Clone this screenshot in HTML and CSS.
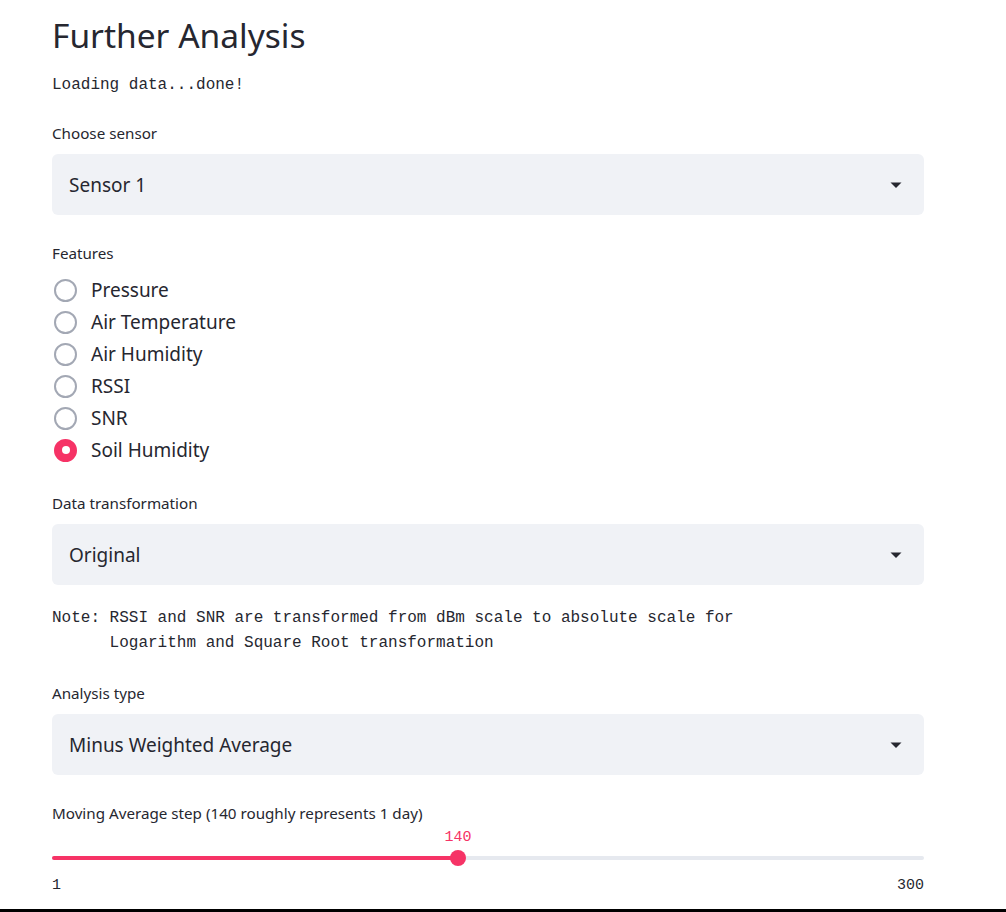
FILE: index.html
```html
<!DOCTYPE html>
<html>
<head>
<meta charset="utf-8">
<link rel="stylesheet" href="styles.css">
</head>
<body>
<main class="main">
  <h1 class="title">Further Analysis</h1>
  <pre class="code">Loading data...done!</pre>

  <div class="widget">
    <div class="label">Choose sensor</div>
    <div class="select"><span>Sensor 1</span><svg class="caret" width="12" height="7" viewBox="0 0 12 7"><path d="M0.5 0.5 H11.5 L6 6 Z" fill="#262730"/></svg></div>
  </div>

  <div class="widget features">
    <div class="label">Features</div>
    <div class="radios">
      <div class="radio"><span class="dot"></span>Pressure</div>
      <div class="radio"><span class="dot"></span>Air Temperature</div>
      <div class="radio"><span class="dot"></span>Air Humidity</div>
      <div class="radio"><span class="dot"></span>RSSI</div>
      <div class="radio"><span class="dot"></span>SNR</div>
      <div class="radio"><span class="dot on"></span>Soil Humidity</div>
    </div>
  </div>

  <div class="widget">
    <div class="label">Data transformation</div>
    <div class="select"><span>Original</span><svg class="caret" width="12" height="7" viewBox="0 0 12 7"><path d="M0.5 0.5 H11.5 L6 6 Z" fill="#262730"/></svg></div>
  </div>

  <pre class="code note">Note: RSSI and SNR are transformed from dBm scale to absolute scale for
      Logarithm and Square Root transformation</pre>

  <div class="widget">
    <div class="label">Analysis type</div>
    <div class="select"><span>Minus Weighted Average</span><svg class="caret" width="12" height="7" viewBox="0 0 12 7"><path d="M0.5 0.5 H11.5 L6 6 Z" fill="#262730"/></svg></div>
  </div>

  <div class="widget slider">
    <div class="label">Moving Average step (140 roughly represents 1 day)</div>
    <div class="track-wrap">
      <div class="track">
        <div class="fill" style="width: 46.56%"></div>
        <div class="thumb" style="left: 46.56%"><span class="val">140</span></div>
      </div>
    </div>
    <div class="ticks"><span>1</span><span>300</span></div>
  </div>
</main>
<div class="bottom-bar"></div>
</body>
</html>
```
FILE: styles.css
```css
html, body {
  margin: 0;
  padding: 0;
  background: #ffffff;
}
body {
  font-family: "Noto Sans", "Open Sans", sans-serif;
  color: #262730;
  width: 1006px;
  height: 912px;
  overflow: hidden;
  position: relative;
}
.main {
  width: 872px;
  padding: 12px 0 0 52px;
  display: flex;
  flex-direction: column;
}
.title {
  margin: 0;
  font-size: 33.5px;
  font-weight: 400;
  line-height: 47px;
}
.code {
  margin: 0;
  font-family: "Liberation Mono", "DejaVu Sans Mono", monospace;
  font-size: 16px;
  line-height: 25px;
  color: #262730;
}
.title + .code {
  margin-top: 14px;
}
.widget {
  display: flex;
  flex-direction: column;
}
.label {
  font-size: 15.2px;
  line-height: 20px;
  color: #262730;
}
.title + .code + .widget {
  margin-top: 25px;
}
.select {
  margin-top: 11px;
  height: 61px;
  background: #f0f2f6;
  border-radius: 6px;
  display: flex;
  align-items: center;
  justify-content: space-between;
  padding: 0 22px 0 17px;
  font-size: 19px;
}
.caret {
  margin-top: 2px;
}
.features {
  margin-top: 28px;
}
.radios {
  margin-top: 11px;
  display: flex;
  flex-direction: column;
}
.radio {
  height: 32px;
  display: flex;
  align-items: center;
  font-size: 19px;
}
.dot {
  width: 19px;
  height: 19px;
  border: 2.5px solid #a3a8b4;
  border-radius: 50%;
  margin: 0 14px 0 2px;
  box-sizing: content-box;
  flex: none;
}
.dot.on {
  border-color: #f63366;
  background: #f63366;
  position: relative;
}
.dot.on::after {
  content: "";
  position: absolute;
  width: 8px;
  height: 8px;
  background: #ffffff;
  border-radius: 50%;
  left: 50%;
  top: 50%;
  transform: translate(-50%, -50%);
}
.features + .widget {
  margin-top: 27px;
}
.note {
  margin-top: 21px;
}
.note + .widget {
  margin-top: 27px;
}
.slider {
  margin-top: 28px;
}
.track-wrap {
  padding-top: 33px;
}
.track {
  position: relative;
  height: 4px;
  background: #e6e9ef;
  border-radius: 2px;
}
.fill {
  height: 4px;
  background: #f63366;
  border-radius: 2px;
}
.thumb {
  position: absolute;
  top: 50%;
  width: 16px;
  height: 16px;
  background: #f63366;
  border-radius: 50%;
  transform: translate(-50%, -50%);
}
.val {
  position: absolute;
  bottom: 19px;
  left: 50%;
  transform: translateX(-50%);
  font-family: "Liberation Mono", "DejaVu Sans Mono", monospace;
  font-size: 15px;
  color: #f63366;
  line-height: 18px;
}
.ticks {
  margin-top: 16px;
  display: flex;
  justify-content: space-between;
  font-family: "Liberation Mono", "DejaVu Sans Mono", monospace;
  font-size: 15px;
  line-height: 20px;
}
.bottom-bar {
  position: absolute;
  left: 0;
  right: 0;
  bottom: 0;
  height: 3px;
  background: #000000;
}
```
